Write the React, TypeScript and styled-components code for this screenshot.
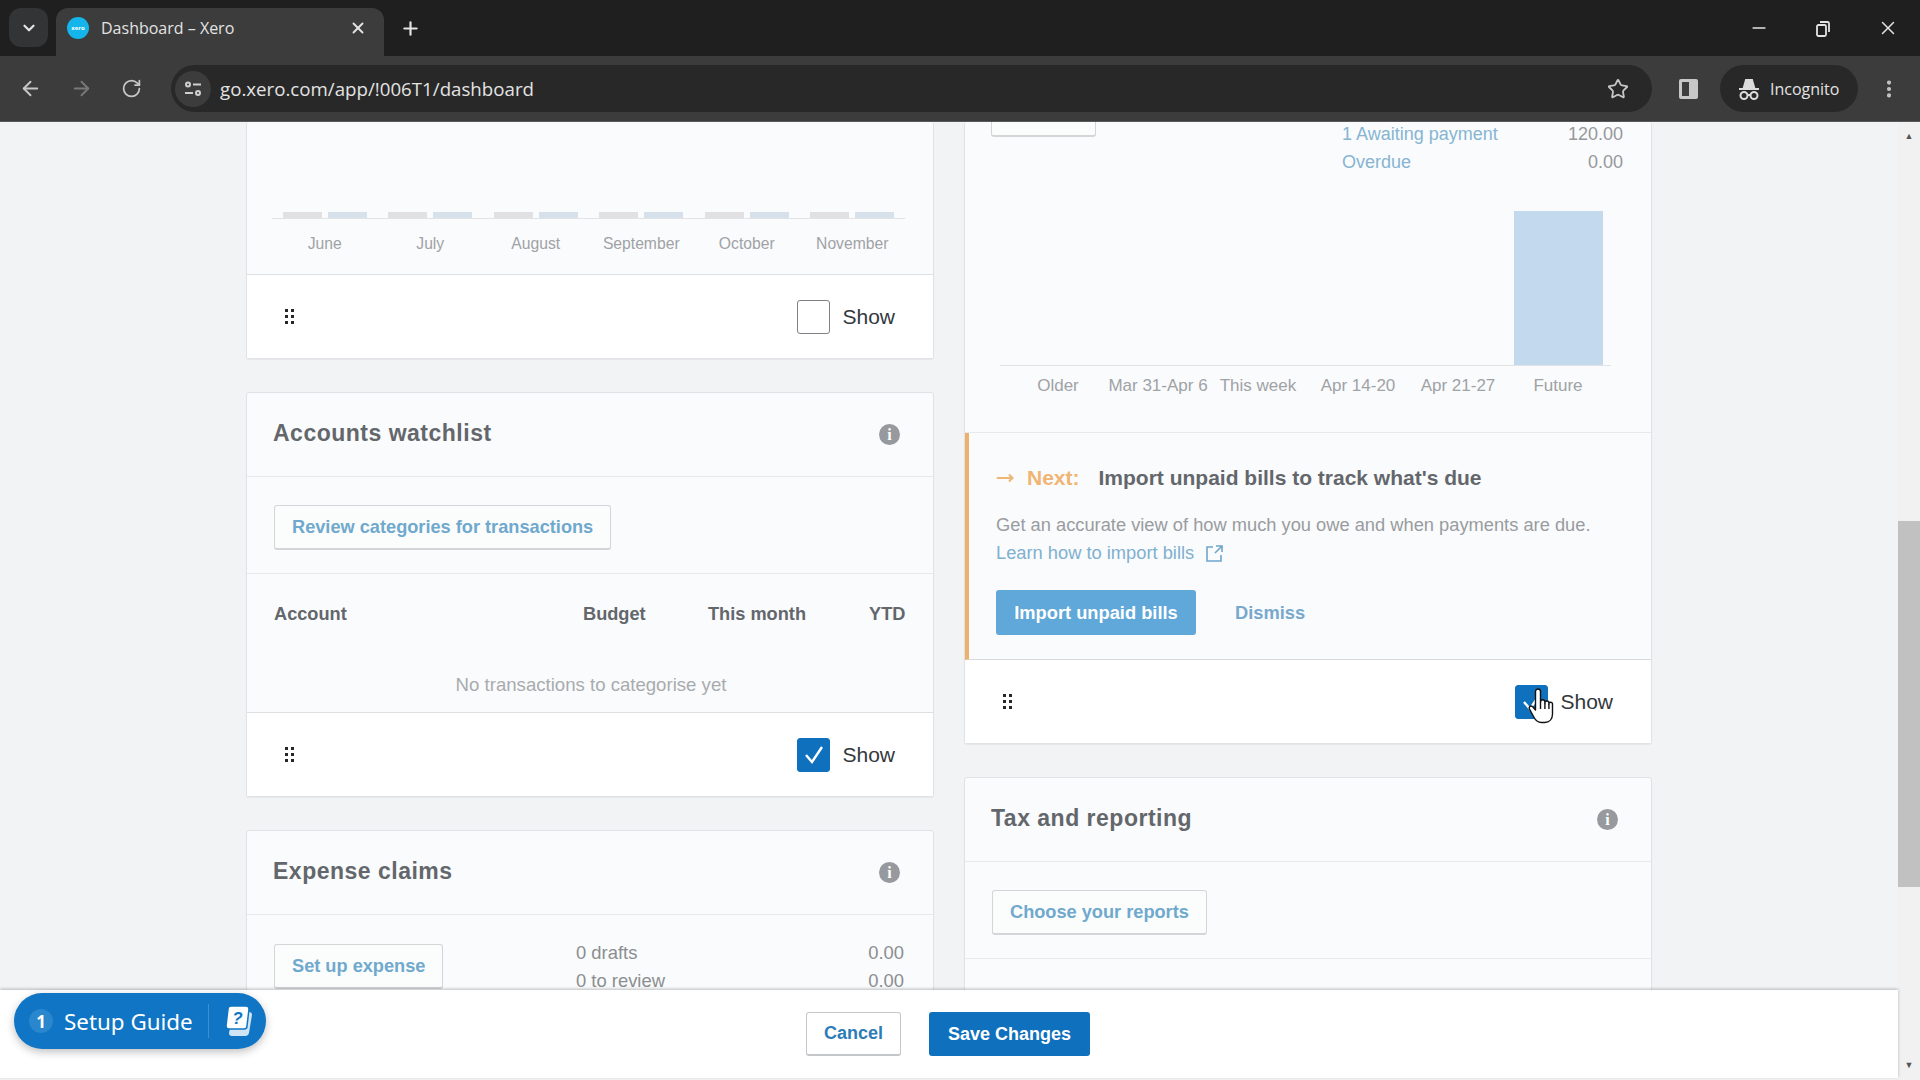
import React from "react";
import styled, { createGlobalStyle } from "styled-components";
import {
  ArrowLeft,
  ArrowRight,
  ChevronDown,
  EllipsisVertical,
  Minus,
  MoveRight,
  Plus,
  RotateCw,
  Star,
  X,
} from "lucide-react";

const GlobalStyle = createGlobalStyle`
  html, body {
    margin: 0;
    padding: 0;
    height: 100%;
    overflow: hidden;
    background: #f2f3f5;
    font-family: "Liberation Sans", Arial, sans-serif;
  }
  #root { height: 100%; }
  * { box-sizing: border-box; }
`;

const Shell = styled.div`
  position: relative;
  display: flex;
  flex-direction: column;
  width: 1920px;
  height: 1080px;
  overflow: hidden;
`;

/* browser chrome */
const TabStrip = styled.div`
  flex: none;
  display: flex;
  align-items: flex-end;
  height: 56px;
  padding-left: 9px;
  background: #1f1f1f;
  color: #e3e3e3;
  font-family: "Open Sans", "Noto Sans", sans-serif;
`;

const TabSearch = styled.div`
  align-self: flex-start;
  display: flex;
  align-items: center;
  justify-content: center;
  width: 39px;
  height: 39px;
  margin-top: 8px;
  border-radius: 12px;
  background: #333435;
`;

const Tab = styled.div`
  display: flex;
  align-items: center;
  width: 328px;
  height: 48px;
  margin-left: 8px;
  padding: 0 17px 8px 11px;
  border-radius: 12px 12px 0 0;
  background: #3c3c3c;
  font-size: 16px;
`;

const Favicon = styled.span`
  display: flex;
  align-items: center;
  justify-content: center;
  flex: none;
  width: 22px;
  height: 22px;
  margin-right: 12px;
  border-radius: 50%;
  background: #13b5ea;
  color: #fff;
  font-size: 6px;
  font-weight: 700;
`;

const TabTitle = styled.span`
  flex: 1;
  white-space: nowrap;
`;

const NewTab = styled.div`
  align-self: flex-start;
  display: flex;
  margin: 18px 0 0 16px;
`;

const WindowControls = styled.div`
  align-self: flex-start;
  display: flex;
  align-items: center;
  gap: 44px;
  height: 20px;
  margin: 18px 21px 0 auto;
`;

const RestoreIcon = styled.svg`
  width: 20px;
  height: 20px;
`;

const Toolbar = styled.div`
  flex: none;
  display: flex;
  align-items: center;
  height: 66px;
  padding: 0 0 0 19px;
  background: #3c3c3c;
  border-bottom: 1px solid #58595a;
  color: #c7c7c7;
  font-family: "Open Sans", "Noto Sans", sans-serif;
`;

const NavButtons = styled.div`
  display: flex;
  align-items: center;
  gap: 28px;
  width: 152px;
`;

const AddressBar = styled.div`
  display: flex;
  align-items: center;
  width: 1481px;
  height: 47px;
  padding: 0 23px 0 4px;
  border-radius: 24px;
  background: #282828;
`;

const SiteInfo = styled.span`
  display: flex;
  align-items: center;
  justify-content: center;
  width: 36px;
  height: 36px;
  margin-right: 9px;
  border-radius: 50%;
  background: #3c3c3c;
`;

const Url = styled.span`
  flex: 1;
  color: #e3e3e3;
  font-size: 18.7px;
  white-space: nowrap;
`;

const PanelIcon = styled.span`
  display: block;
  width: 19px;
  height: 20px;
  margin: 0 22px 0 27px;
  border: 3px solid #c7c7c7;
  border-right-width: 9px;
  border-radius: 2px;
`;

const IncognitoPill = styled.div`
  display: flex;
  align-items: center;
  gap: 10px;
  width: 138px;
  height: 47px;
  padding-left: 18px;
  border-radius: 24px;
  background: #282828;
  color: #e3e3e3;
  font-size: 16px;
`;

const MenuButton = styled.span`
  display: flex;
  margin-left: 20px;
`;

/* page */
const Page = styled.div`
  flex: 1;
  min-height: 0;
  display: flex;
`;

const MainArea = styled.div`
  flex: 1;
  min-width: 0;
  display: flex;
  flex-direction: column;
  padding-bottom: 2px;
`;

const Columns = styled.div`
  flex: 1;
  min-height: 0;
  display: flex;
  justify-content: center;
  gap: 30px;
  overflow: hidden;
`;

const Column = styled.div`
  display: flex;
  flex-direction: column;
  gap: 33px;
  width: 688px;
`;

const Card = styled.section`
  flex: none;
  border: 1px solid #e1e2e5;
  border-top-width: ${(p: { $cut?: boolean }) => (p.$cut ? "0" : "1px")};
  border-radius: 3px;
  background: #fafbfc;
  box-shadow: 0 1px 1px rgba(0, 0, 0, 0.05);
`;

const CardHeader = styled.header`
  display: flex;
  align-items: center;
  justify-content: space-between;
  height: 84px;
  padding: 0 33px 0 26px;
  border-bottom: 1px solid #e8e9eb;
`;

const CardTitle = styled.h2`
  margin: 0 0 3px;
  color: #63676c;
  font-size: 23px;
  font-weight: 700;
  letter-spacing: 0.5px;
`;

const InfoBadge = styled.span`
  display: flex;
  align-items: center;
  justify-content: center;
  width: 21px;
  height: 21px;
  border-radius: 50%;
  background: #96999d;
  color: #fff;
  font-family: "Liberation Serif", serif;
  font-size: 16px;
  font-weight: 700;
`;

const CardSection = styled.div`
  padding: 28px 27px 23px;
  border-bottom: 1px solid #e8e9eb;
`;

const OutlineButton = styled.button`
  display: inline-flex;
  align-items: center;
  justify-content: center;
  height: 45px;
  padding: 0 17px;
  border: 1px solid #d3d5d8;
  border-bottom-width: 2px;
  border-radius: 3px;
  background: #fbfcfc;
  color: #6fa9cd;
  font-family: inherit;
  font-size: 18.2px;
  font-weight: 700;
`;

/* footer strip of every card in edit mode */
const EditFooter = styled.div`
  display: flex;
  align-items: center;
  justify-content: space-between;
  height: 83px;
  padding: 0 38px 0 38px;
  background: #fff;
`;

const DragHandle = styled.span`
  display: grid;
  grid-template-columns: repeat(2, 3px);
  gap: 3px;
  & > i {
    width: 3px;
    height: 3px;
    background: #24282c;
  }
`;

const ShowToggle = styled.label`
  display: flex;
  align-items: center;
  gap: 12px;
  color: #33383c;
  font-size: 21px;
`;

const CheckBox = styled.span<{ $on?: boolean }>`
  display: flex;
  align-items: center;
  justify-content: center;
  width: 33px;
  height: 34px;
  border: 1px solid ${(p) => (p.$on ? "#0f70bd" : "#7d8185")};
  border-radius: 3px;
  background: ${(p) => (p.$on ? "#0f70bd" : "#fff")};
`;

const SectionLine = styled.div`
  height: 1px;
  background: #dfe0e3;
`;

/* charts */
const MonthChart = styled.div`
  display: flex;
  flex-direction: column;
  height: 152px;
  padding: 90px 28px 0 25px;
`;

const Plot = styled.div<{ $height: number }>`
  display: grid;
  grid-template-columns: repeat(6, 1fr);
  align-items: end;
  height: ${(p) => p.$height}px;
  border-bottom: 1px solid #e2e3e5;
`;

const BarPair = styled.div`
  display: flex;
  justify-content: center;
  gap: 6px;
`;

const MiniBar = styled.span<{ $blue?: boolean }>`
  width: 39px;
  height: 6px;
  background: ${(p) => (p.$blue ? "#d6e1ec" : "#e1e1e3")};
`;

const AxisLabels = styled.div`
  display: grid;
  grid-template-columns: repeat(6, 1fr);
  margin-top: 16px;
  color: #9fa2a6;
  font-size: 15.7px;
  text-align: center;
  white-space: nowrap;
`;

const BillsSummary = styled.div`
  height: 311px;
  padding: 0 27px 0 26px;
  border-bottom: 1px solid #e8e9eb;
`;

const SummaryTop = styled.div`
  display: flex;
  align-items: flex-start;
  height: 89px;
`;

const CutButton = styled.div`
  width: 105px;
  height: 15px;
  border: 1px solid #d3d5d8;
  border-top: 0;
  border-bottom-width: 2px;
  border-radius: 0 0 3px 3px;
  background: #fbfcfc;
`;

const StatList = styled.div`
  display: grid;
  grid-template-columns: 1fr auto;
  row-gap: 10px;
  width: 281px;
  margin: 0 1px 0 auto;
  padding: 3px 0 0;
  font-size: 18px;
  line-height: 18px;
`;

const StatLink = styled.span`
  color: #86b5d3;
`;

const StatValue = styled.span`
  color: #96999c;
  text-align: right;
`;

const BillsPlot = styled(Plot)`
  margin: 0 13px 0 9px;
  padding: 0 3px 0 8px;
`;

const BigBar = styled.span`
  grid-column: 6;
  justify-self: center;
  width: 89px;
  height: 154px;
  background: #c3d9ed;
`;

const BillsLabels = styled(AxisLabels)`
  margin: 10px 16px 0 17px;
  font-size: 17px;
`;

const NextPanel = styled.div`
  height: 227px;
  padding: 27px 26px 0 27px;
  border-left: 4px solid #eeb06c;
  border-bottom: 1px solid #d9dadd;
`;

const NextHeading = styled.div`
  display: flex;
  align-items: center;
  color: #63676c;
  font-size: 21px;
  font-weight: 700;
  line-height: 36px;
`;

const NextLabel = styled.span`
  margin: 0 19px 0 13px;
  color: #f0b574;
`;

const NextBody = styled.p`
  margin: 15px 0 0;
  color: #999ca0;
  font-size: 18.3px;
  line-height: 28px;
  white-space: nowrap;
`;

const HelpLink = styled.span`
  display: inline-flex;
  align-items: center;
  gap: 11px;
  color: #7fb0d0;
`;

const NextActions = styled.div`
  display: flex;
  align-items: center;
  gap: 39px;
  margin-top: 23px;
`;

const PaleButton = styled.button`
  height: 45px;
  width: 200px;
  border: 0;
  border-radius: 3px;
  background: #60a7da;
  color: #fff;
  font-family: inherit;
  font-size: 18.3px;
  font-weight: 700;
`;

const TextLink = styled.span`
  color: #78a9cc;
  font-size: 18.3px;
  font-weight: 700;
`;

/* tables */
const WatchTable = styled.div`
  height: 138px;
  padding: 29px 27px 0 27px;
`;

const WatchHead = styled.div`
  display: grid;
  grid-template-columns: 1fr 62px 98px 37px;
  column-gap: 63px;
  color: #63676c;
  font-size: 18.2px;
  font-weight: 700;
  line-height: 22px;
`;

const EmptyNote = styled.div`
  margin-top: 49px;
  padding-left: 2px;
  color: #a8abae;
  font-size: 18.6px;
  text-align: center;
`;

const ExpenseBody = styled.div`
  display: flex;
  padding: 29px 29px 40px 27px;
`;

const ExpenseStats = styled.div`
  display: grid;
  grid-template-columns: 1fr auto;
  align-content: start;
  row-gap: 10px;
  width: 328px;
  margin-left: auto;
  color: #8b8e91;
  font-size: 18.4px;
  line-height: 18px;
`;

const CardRest = styled.div`
  height: 120px;
`;

/* bottom action bar */
const ActionBar = styled.div`
  position: relative;
  flex: none;
  display: flex;
  align-items: center;
  justify-content: center;
  gap: 28px;
  height: 88px;
  padding-right: 2px;
  background: #fff;
  box-shadow: 0 -1px 3px rgba(0, 0, 0, 0.25);
`;

const CancelButton = styled.button`
  width: 95px;
  height: 44px;
  border: 1px solid #c4c7ca;
  border-bottom-width: 2px;
  border-radius: 3px;
  background: #fff;
  color: #2c7cb8;
  font-family: inherit;
  font-size: 18px;
  font-weight: 700;
`;

const SaveButton = styled.button`
  width: 161px;
  height: 44px;
  border: 0;
  border-radius: 3px;
  background: #0f70bd;
  color: #fff;
  font-family: inherit;
  font-size: 18px;
  font-weight: 700;
`;

const Scrollbar = styled.div`
  flex: none;
  display: flex;
  flex-direction: column;
  align-items: center;
  width: 22px;
  padding-top: 9px;
  background: #f1f1f1;
  color: #555;
  font-size: 9px;
  line-height: 10px;
`;

const ScrollThumb = styled.div`
  width: 100%;
  height: 366px;
  margin: 380px 0 auto;
  background: #c1c1c1;
`;

const ScrollArrow = styled.span`
  margin-bottom: 10px;
`;

/* overlays */
const SetupGuide = styled.div`
  position: absolute;
  left: 14px;
  top: 993px;
  display: flex;
  align-items: center;
  width: 252px;
  height: 56px;
  padding-left: 15px;
  border-radius: 28px;
  background: #0f75c4;
  box-shadow: 0 3px 8px rgba(0, 0, 0, 0.25);
  color: #fff;
  font-family: "Noto Sans", "Open Sans", sans-serif;
`;

const GuideCount = styled.span`
  display: flex;
  align-items: center;
  justify-content: center;
  width: 24px;
  height: 24px;
  margin-right: 11px;
  border-radius: 50%;
  background: #2a86cd;
  font-size: 17px;
  font-weight: 700;
`;

const GuideLabel = styled.span`
  font-size: 22.4px;
`;

const GuideDivider = styled.span`
  width: 1px;
  height: 34px;
  margin: 0 14px 0 15px;
  background: #3d8fd0;
`;

const CursorWrap = styled.span`
  position: absolute;
  left: 1528px;
  top: 688px;
  display: flex;
`;

const Drag = () => (
  <DragHandle>
    {Array.from({ length: 6 }).map((_, i) => (
      <i key={i} />
    ))}
  </DragHandle>
);

const Footer = ({ on }: { on?: boolean }) => (
  <EditFooter>
    <Drag />
    <ShowToggle>
      <CheckBox $on={on}>
        {on && (
          <svg width="22" height="22" viewBox="0 0 22 22" fill="none">
            <path d="M3 11l6 7L19 3" stroke="#fff" strokeWidth="2.4" />
          </svg>
        )}
      </CheckBox>
      Show
    </ShowToggle>
  </EditFooter>
);

const months = ["June", "July", "August", "September", "October", "November"];
const weeks = ["Older", "Mar 31-Apr 6", "This week", "Apr 14-20", "Apr 21-27", "Future"];

const App: React.FC = () => {
  return (
    <Shell>
      <GlobalStyle />
      <TabStrip>
        <TabSearch>
          <ChevronDown size={18} strokeWidth={3} color="#e3e3e3" />
        </TabSearch>
        <Tab>
          <Favicon>xero</Favicon>
          <TabTitle>Dashboard – Xero</TabTitle>
          <X size={18} strokeWidth={2.5} />
        </Tab>
        <NewTab>
          <Plus size={21} strokeWidth={2.5} />
        </NewTab>
        <WindowControls>
          <Minus size={20} />
          <RestoreIcon viewBox="0 0 20 20" fill="none" stroke="#e3e3e3" strokeWidth="1.8">
            <rect x="4" y="7" width="9" height="11" rx="1.5" />
            <path d="M7 4h7.5A1.5 1.5 0 0 1 16 5.500V14" />
          </RestoreIcon>
          <X size={22} strokeWidth={1.6} />
        </WindowControls>
      </TabStrip>

      <Toolbar>
        <NavButtons>
          <ArrowLeft size={23} />
          <ArrowRight size={23} color="#77787a" />
          <RotateCw size={21} />
        </NavButtons>
        <AddressBar>
          <SiteInfo>
            <svg width="20" height="20" viewBox="0 0 20 20" fill="none" stroke="#d0d0d0" strokeWidth="2">
              <circle cx="5" cy="5.500" r="2" />
              <path d="M10 5.500h8M2 14h8" />
              <circle cx="15" cy="14" r="2" />
            </svg>
          </SiteInfo>
          <Url>go.xero.com/app/!006T1/dashboard</Url>
          <Star size={22} strokeWidth={2} />
        </AddressBar>
        <PanelIcon />
        <IncognitoPill>
          <svg width="22" height="24" viewBox="0 0 22 24" fill="none" stroke="#dcdcdc" strokeWidth="2">
            <path d="M6 10l2-7h6l2 7z" fill="#dcdcdc" />
            <path d="M1 12h20" />
            <circle cx="6" cy="18.500" r="3.500" />
            <circle cx="16" cy="18.500" r="3.500" />
            <path d="M9.500 18h3" />
          </svg>
          Incognito
        </IncognitoPill>
        <MenuButton>
          <EllipsisVertical size={22} strokeWidth={2.5} />
        </MenuButton>
      </Toolbar>

      <Page>
        <MainArea>
          <Columns>
            <Column>
              <Card $cut>
                <MonthChart>
                  <Plot $height={7}>
                    {months.map((m) => (
                      <BarPair key={m}>
                        <MiniBar />
                        <MiniBar $blue />
                      </BarPair>
                    ))}
                  </Plot>
                  <AxisLabels>
                    {months.map((m) => (
                      <span key={m}>{m}</span>
                    ))}
                  </AxisLabels>
                </MonthChart>
                <SectionLine />
                <Footer />
              </Card>

              <Card>
                <CardHeader>
                  <CardTitle>Accounts watchlist</CardTitle>
                  <InfoBadge>i</InfoBadge>
                </CardHeader>
                <CardSection>
                  <OutlineButton>Review categories for transactions</OutlineButton>
                </CardSection>
                <WatchTable>
                  <WatchHead>
                    <span>Account</span>
                    <span>Budget</span>
                    <span>This month</span>
                    <span>YTD</span>
                  </WatchHead>
                  <EmptyNote>No transactions to categorise yet</EmptyNote>
                </WatchTable>
                <SectionLine />
                <Footer on />
              </Card>

              <Card>
                <CardHeader>
                  <CardTitle>Expense claims</CardTitle>
                  <InfoBadge>i</InfoBadge>
                </CardHeader>
                <ExpenseBody>
                  <OutlineButton>Set up expense</OutlineButton>
                  <ExpenseStats>
                    <span>0 drafts</span>
                    <span>0.00</span>
                    <span>0 to review</span>
                    <span>0.00</span>
                  </ExpenseStats>
                </ExpenseBody>
              </Card>
            </Column>

            <Column>
              <Card $cut>
                <BillsSummary>
                  <SummaryTop>
                    <CutButton />
                    <StatList>
                      <StatLink>1 Awaiting payment</StatLink>
                      <StatValue>120.00</StatValue>
                      <StatLink>Overdue</StatLink>
                      <StatValue>0.00</StatValue>
                    </StatList>
                  </SummaryTop>
                  <BillsPlot $height={155}>
                    <BigBar />
                  </BillsPlot>
                  <BillsLabels>
                    {weeks.map((w) => (
                      <span key={w}>{w}</span>
                    ))}
                  </BillsLabels>
                </BillsSummary>
                <NextPanel>
                  <NextHeading>
                    <MoveRight size={18} color="#f0b574" strokeWidth={2.5} />
                    <NextLabel>Next:</NextLabel>
                    Import unpaid bills to track what's due
                  </NextHeading>
                  <NextBody>
                    Get an accurate view of how much you owe and when payments are due.
                    <br />
                    <HelpLink>
                      Learn how to import bills
                      <svg width="19" height="19" viewBox="0 0 19 19" fill="none" stroke="#6ea6cb" strokeWidth="1.6">
                        <path d="M8 3H2v14h14v-6" />
                        <path d="M11 2h6v6M17 2l-7 7" />
                      </svg>
                    </HelpLink>
                  </NextBody>
                  <NextActions>
                    <PaleButton>Import unpaid bills</PaleButton>
                    <TextLink>Dismiss</TextLink>
                  </NextActions>
                </NextPanel>
                <Footer on />
              </Card>

              <Card>
                <CardHeader>
                  <CardTitle>Tax and reporting</CardTitle>
                  <InfoBadge>i</InfoBadge>
                </CardHeader>
                <CardSection>
                  <OutlineButton>Choose your reports</OutlineButton>
                </CardSection>
                <CardRest />
              </Card>
            </Column>
          </Columns>
          <ActionBar>
            <CancelButton>Cancel</CancelButton>
            <SaveButton>Save Changes</SaveButton>
          </ActionBar>
        </MainArea>
        <Scrollbar>
          <span>▲</span>
          <ScrollThumb />
          <ScrollArrow>▼</ScrollArrow>
        </Scrollbar>
      </Page>

      <SetupGuide>
        <GuideCount>1</GuideCount>
        <GuideLabel>Setup Guide</GuideLabel>
        <GuideDivider />
        <svg width="32" height="34" viewBox="0 0 32 34">
          <path d="M10 8h16a3 3 0 0 1 3 3l-3 18a4 4 0 0 1-4 3H9a3 3 0 0 1-3-3z" fill="#cfe4f5" />
          <path d="M8 2h15a3 3 0 0 1 3 3l-2 17a3 3 0 0 1-3 3H6a3 3 0 0 1-3-3L5 5a3 3 0 0 1 3-3z" fill="#fff" stroke="#0f75c4" strokeWidth="1.5" />
          <text x="14.500" y="20" textAnchor="middle" fontFamily="Liberation Sans" fontSize="17" fontWeight="700" fontStyle="italic" fill="#0f75c4">?</text>
        </svg>
      </SetupGuide>

      <CursorWrap>
        <svg width="26" height="36" viewBox="0 0 26 36" fill="#fff" stroke="#111" strokeWidth="1.4" strokeLinejoin="round">
          <path d="M7.500 3.500a2.500 2.500 0 0 1 5 0V14a2.200 2.200 0 0 1 4.400 0v1a2 2 0 0 1 4 0v1a1.800 1.800 0 0 1 3.600 0V26c0 5-3 8.500-8 8.500h-3c-4 0-6-2-8-6L1.500 21c-1-2 1-4 3-2.500L7.500 22z" />
          <path d="M12.500 14v7M16.900 15v6M20.900 16v5" fill="none" />
        </svg>
      </CursorWrap>
    </Shell>
  );
};

export default App;
